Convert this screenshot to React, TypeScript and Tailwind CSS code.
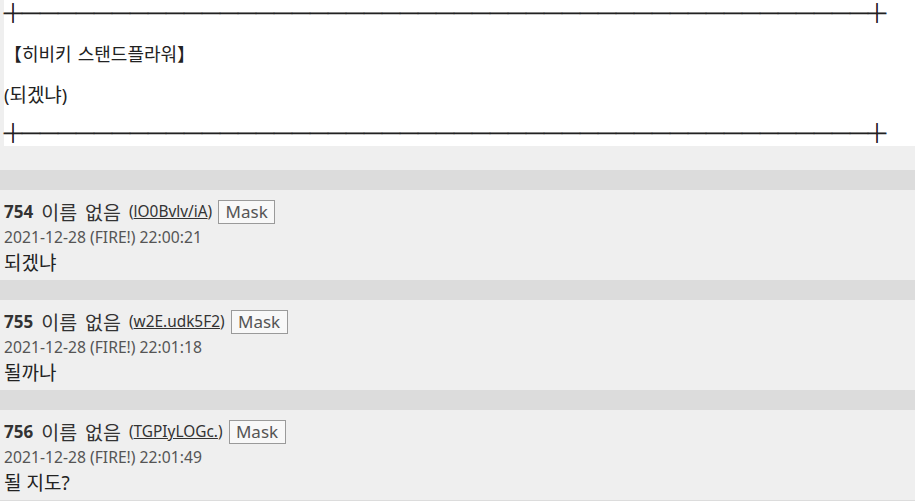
import React from 'react';

const posts = [
  { no: 754, id: 'lO0Bvlv/iA', date: '2021-12-28 (FIRE!) 22:00:21', body: '되겠냐' },
  { no: 755, id: 'w2E.udk5F2', date: '2021-12-28 (FIRE!) 22:01:18', body: '될까나' },
  { no: 756, id: 'TGPIyLOGc.', date: '2021-12-28 (FIRE!) 22:01:49', body: '될 지도?' },
];

const rule = '┼' + '─'.repeat(47) + '┼';

export default function App() {
  return (
    <div className="min-h-[501px] bg-[#efefef] font-['Noto_Sans','Noto_Sans_CJK_KR',sans-serif] text-[16px] text-[#222]">
      <div className="ml-[4px] h-[146px] bg-white flex flex-col">
        <div className="h-[24px] leading-[24px] text-[18px] whitespace-nowrap font-['Noto_Sans_CJK_KR',sans-serif] text-[#222] [-webkit-text-stroke:0.8px_#222]">
          {rule}
        </div>
        <div className="mt-[17px] h-[24px] leading-[24px] text-[18px] font-['Noto_Sans_CJK_KR',sans-serif] [word-spacing:2px]">
          【히비키 스탠드플라워】
        </div>
        <div className="mt-[18px] h-[24px] leading-[24px] text-[18px]">
          (<span className="text-[19px]">되겠냐</span>)
        </div>
        <div className="mt-[13px] h-[24px] leading-[24px] text-[18px] whitespace-nowrap font-['Noto_Sans_CJK_KR',sans-serif] text-[#222] [-webkit-text-stroke:0.8px_#222]">
          {rule}
        </div>
      </div>

      <div className="h-[24px]" />

      {posts.map((post) => (
        <div key={post.no}>
          <div className="h-[20px] bg-[#dcdcdc]" />
          <div className="h-[90px] px-[4px] pt-[10px]">
            <div className="flex items-center h-[24px] text-[#333]">
              <span className="font-bold text-[17px]">{post.no}</span>
              <span className="ml-[8px] text-[19.5px] font-['Noto_Sans_CJK_KR',sans-serif]">이름</span>
              <span className="ml-[8px] text-[19.5px] font-['Noto_Sans_CJK_KR',sans-serif]">없음</span>
              <span className="ml-[8px] text-[15.4px]">
                (<span className="underline">{post.id}</span>)
              </span>
              <span className="ml-[6px] w-[57px] h-[24px] text-center border border-[#9a9a9a] bg-[#f8f8f8] text-[#555] leading-[22px] text-[17px]">
                Mask
              </span>
            </div>
            <div className="mt-[1px] h-[24px] leading-[24px] text-[#555] text-[15.7px]">{post.date}</div>
            <div className="mt-[2px] h-[24px] leading-[24px] text-[#222] text-[19px]">{post.body}</div>
          </div>
        </div>
      ))}
      <div className="h-[20px] bg-[#dcdcdc]" />
    </div>
  );
}
